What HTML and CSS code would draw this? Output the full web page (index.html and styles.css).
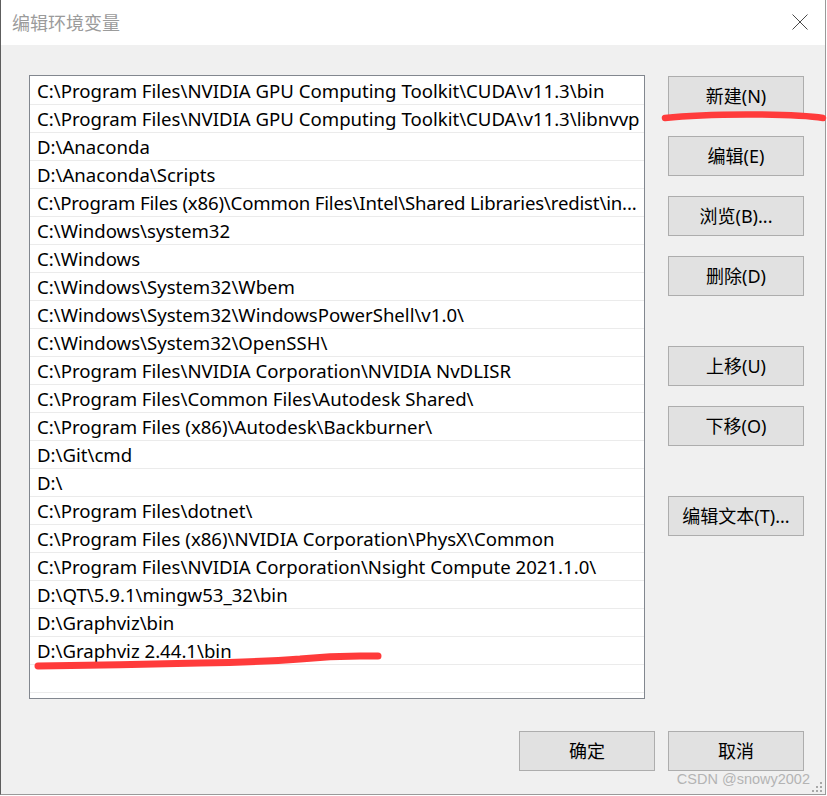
FILE: index.html
```html
<!DOCTYPE html>
<html lang="zh-CN">
<head>
<meta charset="utf-8">
<title>编辑环境变量</title>
<link rel="stylesheet" href="styles.css">
</head>
<body>
<div class="window">
  <div class="titlebar">
    <span class="title">编辑环境变量</span>
    <span class="close">
      <svg width="16" height="16" viewBox="0 0 16 16"><path d="M0.5 0.5 L15.5 15.5 M15.5 0.5 L0.5 15.5" stroke="#4a4a4a" stroke-width="1" fill="none"/></svg>
    </span>
  </div>
  <div class="content">
    <div class="main">
      <div class="list">
        <div class="row">C:\Program Files\NVIDIA GPU Computing Toolkit\CUDA\v11.3\bin</div>
        <div class="row">C:\Program Files\NVIDIA GPU Computing Toolkit\CUDA\v11.3\libnvvp</div>
        <div class="row">D:\Anaconda</div>
        <div class="row">D:\Anaconda\Scripts</div>
        <div class="row tight">C:\Program Files (x86)\Common Files\Intel\Shared Libraries\redist\in...</div>
        <div class="row">C:\Windows\system32</div>
        <div class="row">C:\Windows</div>
        <div class="row">C:\Windows\System32\Wbem</div>
        <div class="row">C:\Windows\System32\WindowsPowerShell\v1.0\</div>
        <div class="row">C:\Windows\System32\OpenSSH\</div>
        <div class="row">C:\Program Files\NVIDIA Corporation\NVIDIA NvDLISR</div>
        <div class="row">C:\Program Files\Common Files\Autodesk Shared\</div>
        <div class="row">C:\Program Files (x86)\Autodesk\Backburner\</div>
        <div class="row">D:\Git\cmd</div>
        <div class="row">D:\</div>
        <div class="row">C:\Program Files\dotnet\</div>
        <div class="row">C:\Program Files (x86)\NVIDIA Corporation\PhysX\Common</div>
        <div class="row">C:\Program Files\NVIDIA Corporation\Nsight Compute 2021.1.0\</div>
        <div class="row">D:\QT\5.9.1\mingw53_32\bin</div>
        <div class="row">D:\Graphviz\bin</div>
        <div class="row">D:\Graphviz 2.44.1\bin</div>
        <div class="row"></div>
      </div>
      <div class="side">
        <div class="group">
          <button class="btn">新建(N)</button>
          <button class="btn">编辑(E)</button>
          <button class="btn">浏览(B)...</button>
          <button class="btn">删除(D)</button>
        </div>
        <div class="group">
          <button class="btn">上移(U)</button>
          <button class="btn">下移(O)</button>
        </div>
        <div class="group">
          <button class="btn">编辑文本(T)...</button>
        </div>
      </div>
    </div>
    <div class="footer">
      <button class="btn">确定</button>
      <button class="btn">取消</button>
    </div>
    <div class="watermark">CSDN @snowy2002</div>
    <svg class="grip" width="10" height="10" viewBox="0 0 10 10">
      <rect x="8" y="0" width="2" height="2" fill="#a8a8a8"/>
      <rect x="4" y="4" width="2" height="2" fill="#a8a8a8"/>
      <rect x="8" y="4" width="2" height="2" fill="#a8a8a8"/>
      <rect x="0" y="8" width="2" height="2" fill="#a8a8a8"/>
      <rect x="4" y="8" width="2" height="2" fill="#a8a8a8"/>
      <rect x="8" y="8" width="2" height="2" fill="#a8a8a8"/>
    </svg>
  </div>
  <svg class="marks" width="827" height="796" viewBox="0 0 827 796">
    <path d="M665 118 Q 700 114 760 114.5 Q 805 115 823 118" stroke="#ff3b3b" stroke-width="6.5" stroke-linecap="round" fill="none"/>
    <path d="M38 666 Q 120 665 200 663 Q 260 662 300 659 Q 330 656 360 656 L 378 656" stroke="#ff3b3b" stroke-width="7" stroke-linecap="round" fill="none"/>
  </svg>
</div>
</body>
</html>
```

FILE: styles.css
```css
html, body {
  margin: 0;
  padding: 0;
  background: #ffffff;
}

body {
  font-family: "Noto Sans", "Noto Sans CJK SC", sans-serif;
  overflow: hidden;
}

.window {
  position: relative;
  width: 826px;
  height: 795px;
  box-sizing: border-box;
  border-left: 1px solid #5d5d5d;
  border-right: 1px solid #9a9a9a;
  border-bottom: 1px solid #9a9a9a;
  display: flex;
  flex-direction: column;
  background: #f0f0f0;
}

.titlebar {
  height: 45px;
  flex: none;
  background: #ffffff;
  display: flex;
  align-items: center;
  justify-content: space-between;
  padding: 0 17px 0 11px;
}

.title {
  font-family: "Noto Sans CJK SC", sans-serif;
  font-size: 18px;
  color: #9b9b9b;
  line-height: 1;
  padding-bottom: 1px;
}

.close {
  display: flex;
  width: 16px;
  height: 16px;
  margin-top: -1px;
}

.content {
  position: relative;
  flex: 1;
  padding: 30px 21px 0 28px;
  display: flex;
  flex-direction: column;
}

.main {
  display: flex;
  gap: 23px;
}

.list {
  width: 616px;
  height: 624px;
  box-sizing: border-box;
  border: 1px solid #82878f;
  background: #ffffff;
  overflow: hidden;
  padding-top: 1px;
}

.row {
  height: 28px;
  box-sizing: border-box;
  border-bottom: 1px solid #ebebeb;
  padding-left: 7px;
  font-size: 18.6px;
  line-height: 28px;
  color: #000;
  white-space: nowrap;
  overflow: hidden;
}

.row.tight {
  letter-spacing: -0.17px;
}

.side {
  display: flex;
  flex-direction: column;
  gap: 50px;
  padding-top: 1px;
}

.group {
  display: flex;
  flex-direction: column;
  gap: 20px;
}

.btn {
  width: 136px;
  height: 40px;
  box-sizing: border-box;
  background: #e1e1e1;
  border: 1px solid #adadad;
  border-radius: 0;
  font-family: "Noto Sans", "Noto Sans CJK SC", sans-serif;
  font-size: 18px;
  color: #000;
  padding: 0;
  margin: 0;
  line-height: 1;
  white-space: nowrap;
}

.footer {
  display: flex;
  justify-content: flex-end;
  gap: 13px;
  margin-top: 32px;
}

.watermark {
  position: absolute;
  right: 15px;
  bottom: 7px;
  font-family: "Liberation Sans", Arial, sans-serif;
  font-size: 14.5px;
  color: #b4b4b4;
}

.grip {
  position: absolute;
  right: 3px;
  bottom: 2px;
}

.marks {
  position: absolute;
  left: -1px;
  top: 0;
  pointer-events: none;
}
```
